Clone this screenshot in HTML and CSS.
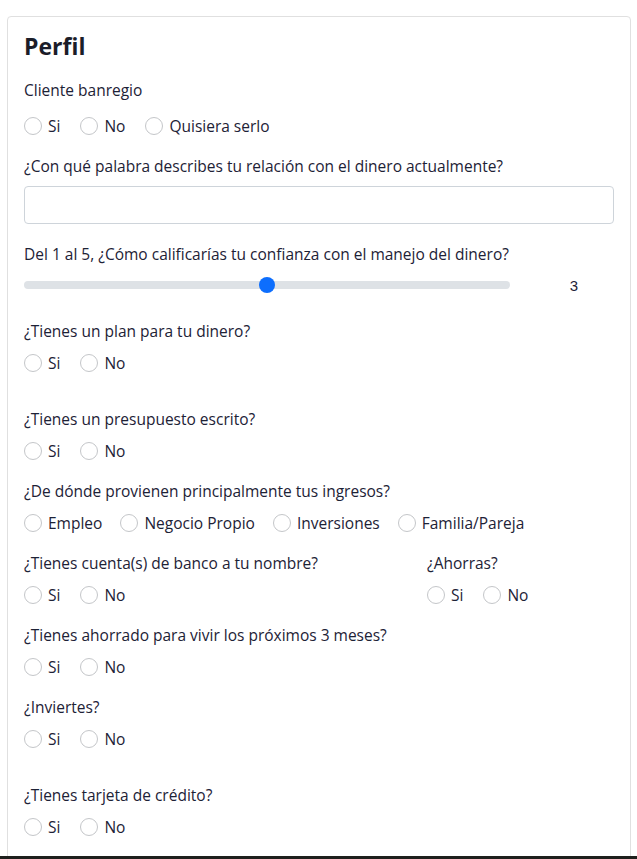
FILE: index.html
```html
<!DOCTYPE html>
<html lang="es">
<head>
<meta charset="utf-8">
<title>Perfil</title>
<link rel="stylesheet" href="styles.css">
</head>
<body>
<div class="card">
  <h1 class="title">Perfil</h1>

  <div class="group">
    <div class="label">Cliente banregio</div>
    <div class="radios first">
      <label class="radio"><span class="dot"></span>Si</label>
      <label class="radio"><span class="dot"></span>No</label>
      <label class="radio"><span class="dot"></span>Quisiera serlo</label>
    </div>
  </div>

  <div class="group">
    <div class="label">¿Con qué palabra describes tu relación con el dinero actualmente?</div>
    <div class="input"></div>
  </div>

  <div class="group slider-group">
    <div class="label">Del 1 al 5, ¿Cómo calificarías tu confianza con el manejo del dinero?</div>
    <div class="slider-row">
      <div class="track"><span class="thumb"></span></div>
      <div class="value">3</div>
    </div>
  </div>

  <div class="group spaced">
    <div class="label">¿Tienes un plan para tu dinero?</div>
    <div class="radios">
      <label class="radio"><span class="dot"></span>Si</label>
      <label class="radio"><span class="dot"></span>No</label>
    </div>
  </div>

  <div class="group">
    <div class="label">¿Tienes un presupuesto escrito?</div>
    <div class="radios">
      <label class="radio"><span class="dot"></span>Si</label>
      <label class="radio"><span class="dot"></span>No</label>
    </div>
  </div>

  <div class="group">
    <div class="label">¿De dónde provienen principalmente tus ingresos?</div>
    <div class="radios tight">
      <label class="radio"><span class="dot"></span>Empleo</label>
      <label class="radio"><span class="dot"></span>Negocio Propio</label>
      <label class="radio"><span class="dot"></span>Inversiones</label>
      <label class="radio"><span class="dot"></span>Familia/Pareja</label>
    </div>
  </div>

  <div class="split">
    <div class="group">
      <div class="label">¿Tienes cuenta(s) de banco a tu nombre?</div>
      <div class="radios">
        <label class="radio"><span class="dot"></span>Si</label>
        <label class="radio"><span class="dot"></span>No</label>
      </div>
    </div>
    <div class="group">
      <div class="label">¿Ahorras?</div>
      <div class="radios">
        <label class="radio"><span class="dot"></span>Si</label>
        <label class="radio"><span class="dot"></span>No</label>
      </div>
    </div>
  </div>

  <div class="group">
    <div class="label">¿Tienes ahorrado para vivir los próximos 3 meses?</div>
    <div class="radios">
      <label class="radio"><span class="dot"></span>Si</label>
      <label class="radio"><span class="dot"></span>No</label>
    </div>
  </div>

  <div class="group spaced">
    <div class="label">¿Inviertes?</div>
    <div class="radios">
      <label class="radio"><span class="dot"></span>Si</label>
      <label class="radio"><span class="dot"></span>No</label>
    </div>
  </div>

  <div class="group">
    <div class="label">¿Tienes tarjeta de crédito?</div>
    <div class="radios">
      <label class="radio"><span class="dot"></span>Si</label>
      <label class="radio"><span class="dot"></span>No</label>
    </div>
  </div>
</div>
<div class="bottom-bar"></div>
</body>
</html>
```

FILE: styles.css
```css
* { box-sizing: border-box; }

html, body {
  margin: 0;
  padding: 0;
  background: #ffffff;
}

body {
  font-family: "Open Sans", "Liberation Sans", sans-serif;
  font-size: 15.5px;
  color: #1d2236;
  overflow: hidden;
  height: 859px;
}

.card {
  margin: 16px 0 0 7px;
  width: 624px;
  border: 1px solid #e0e0e0;
  border-radius: 4px;
  padding: 13px 16px 40px 16px;
}

.title {
  margin: 0 0 18px 0;
  font-size: 23px;
  line-height: 32px;
  font-weight: 700;
  color: #1b1d29;
}

.group {
  margin-bottom: 20px;
}

.group.slider-group {
  margin-bottom: 26px;
}

.group.spaced {
  margin-bottom: 36px;
}

.label {
  line-height: 20px;
  height: 20px;
  white-space: nowrap;
}

.radios {
  margin-top: 12px;
  display: flex;
  gap: 20px;
  height: 20px;
  align-items: center;
}

.radios.first {
  margin-top: 16px;
}

.radios.tight {
  gap: 18px;
}

.radio {
  display: flex;
  align-items: center;
  gap: 6px;
  line-height: 20px;
  white-space: nowrap;
}

.dot {
  width: 18px;
  height: 18px;
  border-radius: 50%;
  border: 1px solid #c4c6c9;
  background: #fff;
  flex: none;
}

.input {
  margin-top: 10px;
  height: 38px;
  border: 1px solid #ced4da;
  border-radius: 4px;
  background: #fff;
}

.slider-row {
  margin-top: 11px;
  display: flex;
  align-items: center;
  height: 20px;
}

.track {
  width: 486px;
  height: 8px;
  border-radius: 4px;
  background: #dee2e6;
  display: flex;
  align-items: center;
  justify-content: center;
}

.thumb {
  width: 16px;
  height: 16px;
  border-radius: 50%;
  background: #0d6efd;
  flex: none;
}

.value {
  margin-left: 56px;
  width: 16px;
  text-align: center;
  font-family: "Liberation Sans", Arial, sans-serif;
  font-size: 15px;
}

.split {
  display: grid;
  grid-template-columns: 403px 1fr;
}

.bottom-bar {
  position: fixed;
  left: 0;
  right: 0;
  bottom: 0;
  height: 3px;
  background: #1e1f1c;
}
```
